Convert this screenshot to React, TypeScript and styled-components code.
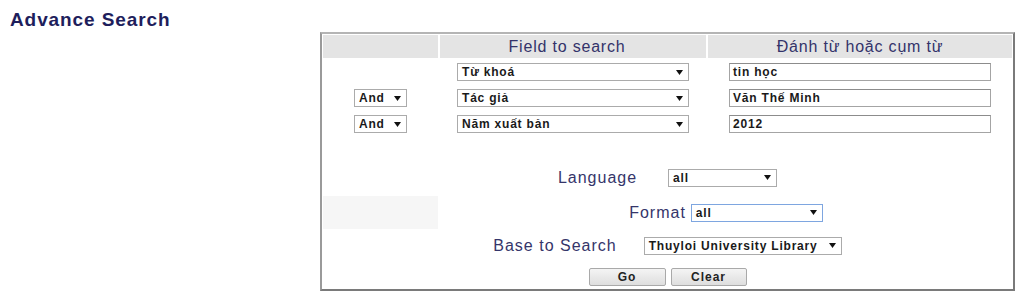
import React from "react"
import styled, { createGlobalStyle } from "styled-components"

const GlobalStyle = createGlobalStyle`
    html, body {
        margin: 0;
        padding: 0;
        background: #ffffff;
        font-family: "Liberation Sans", Arial, sans-serif;
    }
`

const Page = styled.div`
    display: flex;
    flex-direction: column;
    padding: 8px 9px 0 10px;
`

const Title = styled.h1`
    margin: 0;
    font-size: 19px;
    line-height: 23px;
    font-weight: bold;
    letter-spacing: 0.9px;
    color: #1e1e5c;
`

const Panel = styled.div`
    align-self: flex-end;
    margin-top: 1px;
    width: 695px;
    box-sizing: border-box;
    border-style: solid;
    border-width: 2px;
    border-color: #b4b4b4 #7a7a7a #7a7a7a #9a9a9a;
    padding: 1px;
    display: grid;
    grid-template-columns: 115px 266px 1fr;
    grid-template-rows: 23px 24px 24px 24px 21px 33px 33px 29px 26px;
    gap: 2px;
`

const Cell = styled.div<{ $span?: number; $bg?: string; $gap?: number }>`
    grid-column: span ${(p) => p.$span || 1};
    background: ${(p) => p.$bg || "transparent"};
    display: flex;
    align-items: center;
    justify-content: center;
    gap: ${(p) => p.$gap || 0}px;
`

const HeadText = styled.span`
    font-size: 16px;
    letter-spacing: 0.8px;
    color: #33336a;
`

const Label = styled.span`
    font-size: 16px;
    letter-spacing: 1px;
    color: #35356a;
`

const Dropdown = styled.div<{ $width: number; $focus?: boolean }>`
    width: ${(p) => p.$width}px;
    height: 18px;
    box-sizing: border-box;
    border: 1px solid ${(p) => (p.$focus ? "#7ea6e0" : "#ababab")};
    background: #ffffff;
    display: flex;
    align-items: center;
    justify-content: space-between;
    padding: 0 5px 0 4px;
    font-size: 12px;
    font-weight: bold;
    letter-spacing: 0.8px;
    color: #1a1a1a;
    white-space: nowrap;
`

const TextBox = styled.div`
    width: 262px;
    height: 18px;
    box-sizing: border-box;
    border: 1px solid #a4a4a4;
    border-top-color: #8c8c8c;
    background: #ffffff;
    display: flex;
    align-items: center;
    padding: 0 3px;
    font-size: 12px;
    font-weight: bold;
    letter-spacing: 0.8px;
    color: #1a1a1a;
`

const Button = styled.button<{ $width: number }>`
    width: ${(p) => p.$width}px;
    height: 18px;
    margin-top: 4px;
    padding: 0;
    border: 1px solid #a9a9a9;
    border-radius: 2px;
    background: linear-gradient(#f4f4f4, #dedede);
    font-family: "Liberation Sans", Arial, sans-serif;
    font-size: 12px;
    font-weight: bold;
    letter-spacing: 1px;
    color: #222222;
`

const ButtonRow = styled.div`
    display: flex;
    gap: 5px;
    align-items: flex-start;
`

const Arrow = () => (
    <svg width="7" height="5" viewBox="0 0 7 5">
        <polygon points="0,0 7,0 3.5,5" fill="#111" />
    </svg>
)

function Select({ value, width, focus }: { value: string; width: number; focus?: boolean }) {
    return (
        <Dropdown $width={width} $focus={focus}>
            <span>{value}</span>
            <Arrow />
        </Dropdown>
    )
}

const rows = [
    { op: "", field: "Từ khoá", term: "tin học" },
    { op: "And", field: "Tác giả", term: "Văn Thế Minh" },
    { op: "And", field: "Năm xuất bản", term: "2012" },
]

export default function App() {
    return (
        <>
            <GlobalStyle />
            <Page>
                <Title>Advance Search</Title>
                <Panel>
                    <Cell $bg="#e4e4e4" />
                    <Cell $bg="#e4e4e4">
                        <HeadText style={{ marginRight: 12 }}>Field to search</HeadText>
                    </Cell>
                    <Cell $bg="#e4e4e4">
                        <HeadText>Đánh từ hoặc cụm từ</HeadText>
                    </Cell>

                    {rows.map((r) => (
                        <React.Fragment key={r.field}>
                            <Cell>{r.op && <Select value={r.op} width={53} />}</Cell>
                            <Cell>
                                <Select value={r.field} width={232} />
                            </Cell>
                            <Cell>
                                <TextBox>{r.term}</TextBox>
                            </Cell>
                        </React.Fragment>
                    ))}

                    <Cell $span={3} />

                    <Cell $span={3} $gap={31}>
                        <Label>Language</Label>
                        <Select value="all" width={109} />
                    </Cell>

                    <Cell $bg="#f6f6f6" />
                    <Cell $span={2} $gap={5}>
                        <Label>Format</Label>
                        <Select value="all" width={132} focus />
                    </Cell>

                    <Cell $span={3} $gap={27}>
                        <Label>Base to Search</Label>
                        <Select value="Thuyloi University Library" width={198} />
                    </Cell>

                    <Cell $span={3}>
                        <ButtonRow>
                            <Button $width={77}>Go</Button>
                            <Button $width={76}>Clear</Button>
                        </ButtonRow>
                    </Cell>
                </Panel>
            </Page>
        </>
    )
}
